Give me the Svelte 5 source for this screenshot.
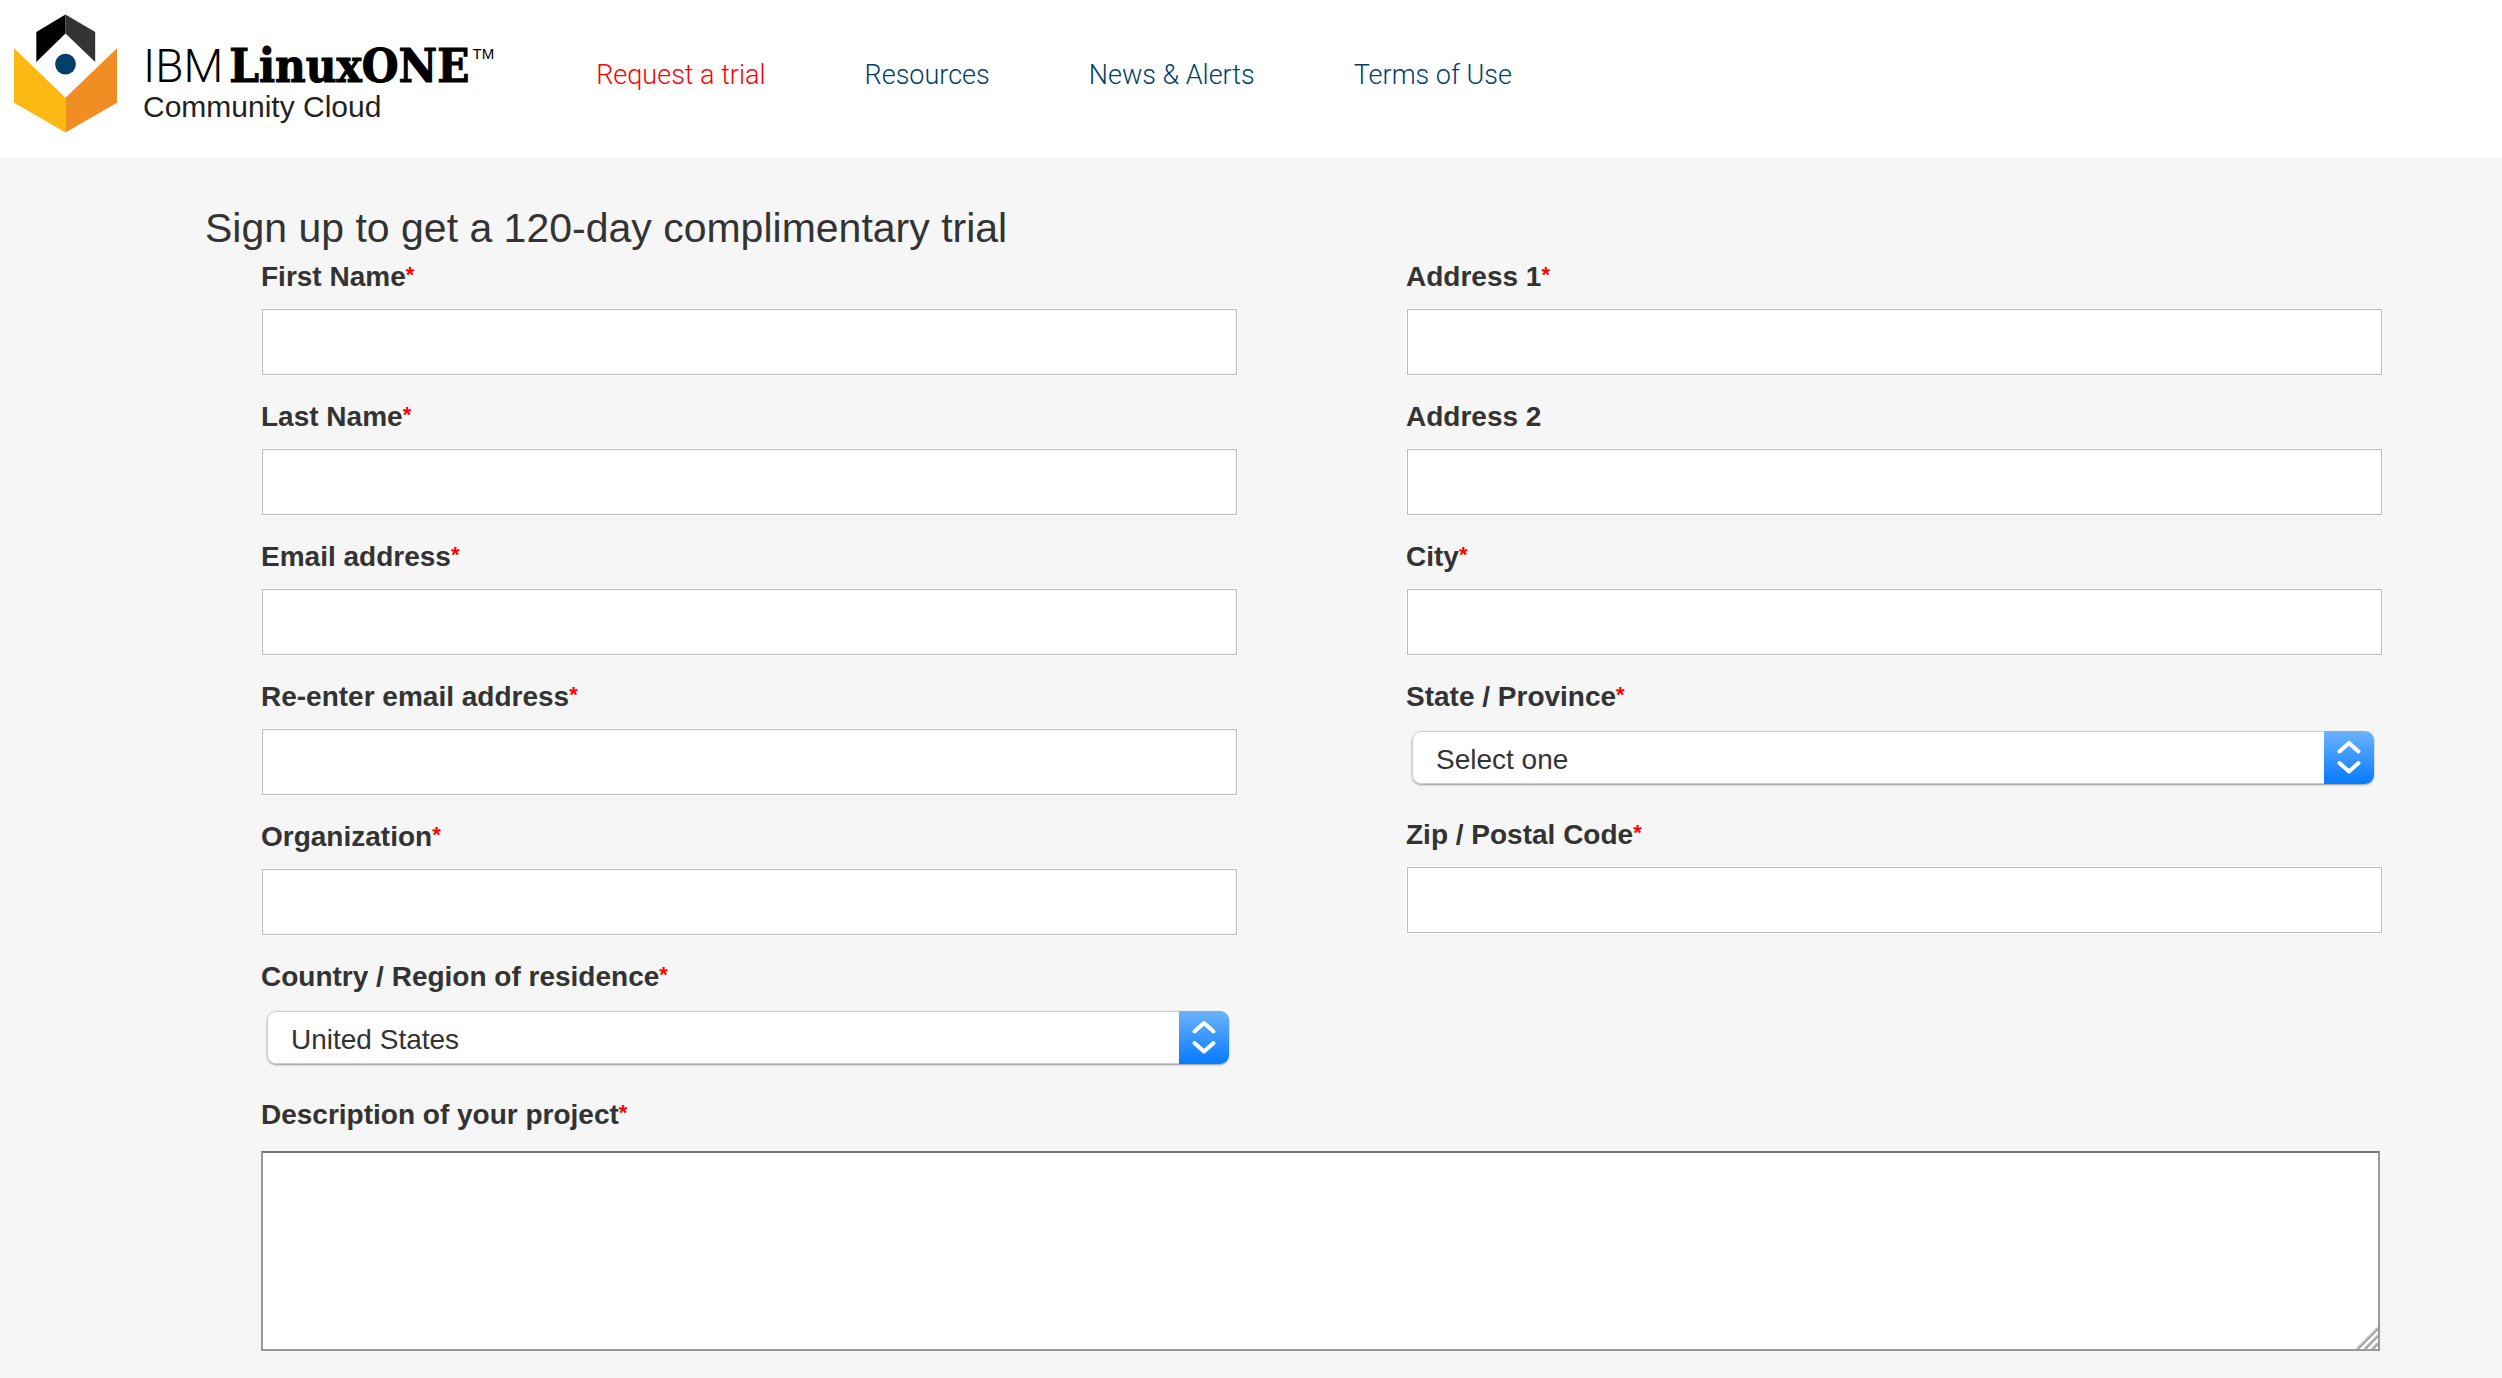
<script>
  const nav = [
    { text: 'Request a trial', href: '#trial', current: true },
    { text: 'Resources', href: '#resources' },
    { text: 'News & Alerts', href: '#news' },
    { text: 'Terms of Use', href: '#terms' }
  ];

  const columns = [
    [
      { id: 'first-name', label: 'First Name', required: true },
      { id: 'last-name', label: 'Last Name', required: true },
      { id: 'email', label: 'Email address', required: true, type: 'email' },
      { id: 'email-confirm', label: 'Re-enter email address', required: true, type: 'email' },
      { id: 'organization', label: 'Organization', required: true },
      { id: 'country', label: 'Country / Region of residence', required: true, options: ['United States', 'Canada'] }
    ],
    [
      { id: 'address-1', label: 'Address 1', required: true },
      { id: 'address-2', label: 'Address 2', required: false },
      { id: 'city', label: 'City', required: true },
      { id: 'state', label: 'State / Province', required: true, options: ['Select one', 'Alabama', 'Alaska'] },
      { id: 'zip', label: 'Zip / Postal Code', required: true }
    ]
  ];
</script>

{#snippet fieldLabel(id, text, required)}
  <label for={id}>{text}{#if required}<span class="star">*</span>{/if}</label>
{/snippet}

<div class="page">
  <header>
    <a class="brand" href="#home">
      <svg class="mark" viewBox="0 0 104 120" aria-hidden="true">
        <path d="M22.500 17.500 52 0v19L22.500 48z" fill="#000" />
        <path d="M52 0l30 17.500V48L52 19z" fill="#333" />
        <path d="M0 34l52 50v35L0 89z" fill="#fdb813" />
        <path d="M104 34L52 84v35l52-30z" fill="#f08e23" />
        <circle cx="52" cy="50" r="10.500" fill="#003f69" />
      </svg>
      <span class="brand-text">
        <span class="product"><span class="ibm">IBM</span><strong>LinuxONE</strong><span class="tm">TM</span></span>
        <span class="tagline">Community Cloud</span>
      </span>
    </a>
    <nav>
      {#each nav as item}
        <a href={item.href} class:current={item.current}>{item.text}</a>
      {/each}
    </nav>
  </header>

  <main>
    <h1>Sign up to get a 120-day complimentary trial</h1>
    <form>
      <div class="columns">
        {#each columns as fields}
          <div class="column">
            {#each fields as field}
              <div class="field">
                {@render fieldLabel(field.id, field.label, field.required)}
                {#if field.options}
                  <div class="select">
                    <select id={field.id}>
                      {#each field.options as option}<option>{option}</option>{/each}
                    </select>
                    <svg viewBox="0 0 50 53" aria-hidden="true">
                      <path d="M15.500 20.500l9.500-8.500 9.500 8.500M15.500 32l9.500 8.500 9.500-8.500" />
                    </svg>
                  </div>
                {:else}
                  <input id={field.id} type={field.type ?? 'text'} />
                {/if}
              </div>
            {/each}
          </div>
        {/each}
      </div>
      <div class="field">
        {@render fieldLabel('description', 'Description of your project', true)}
        <div class="area">
          <textarea id="description"></textarea>
          <svg viewBox="0 0 22 22" aria-hidden="true">
            <path d="M0 22L22 0v22z" fill="#fff" />
            <path d="M1 22L22 1M8.500 22L22 8.500M16 22l6-6" stroke="#ccc" stroke-width="3" />
            <path d="M2 22L22 2M9.500 22L22 9.500M17 22l5-5" stroke="#999" stroke-width="1.500" />
          </svg>
        </div>
      </div>
    </form>
  </main>
</div>

<style>
  :global(body) {
    background: #f6f6f6;
  }

  .page {
    color: #333;
    font-family: 'Liberation Sans', Arial, sans-serif;
    font-size: 28px;
    line-height: 32px;
  }

  header {
    display: flex;
    gap: 102px;
    height: 158px;
    background: #fff;
  }

  .brand {
    display: flex;
    gap: 26px;
    padding: 14px 0 0 14px;
    color: #000;
    text-decoration: none;
  }

  .mark {
    width: 103px;
    height: 120px;
  }

  .brand-text {
    display: flex;
    flex-direction: column;
    padding-top: 26px;
  }

  .product {
    display: flex;
    align-items: baseline;
    line-height: 52px;
  }

  .ibm {
    margin-right: 6px;
    font-family: Roboto, sans-serif;
    font-size: 46px;
    font-weight: 300;
  }

  .product strong {
    font-family: 'DejaVu Serif Condensed', 'DejaVu Serif', serif;
    font-size: 47px;
    -webkit-text-stroke: 1px #000;
  }

  .tm {
    align-self: flex-start;
    margin-left: 3px;
    font-size: 15px;
    line-height: 28px;
  }

  .tagline {
    color: #222;
    font-size: 30px;
    line-height: 30px;
  }

  nav {
    display: flex;
    gap: 99px;
    padding-top: 59px;
    font-family: Roboto, sans-serif;
    font-size: 27px;
    font-weight: 300;
  }

  nav a {
    color: #003f69;
    text-decoration: none;
    white-space: nowrap;
  }

  nav a.current {
    color: #f00;
  }

  main {
    padding: 46px 119px 28px 205px;
  }

  h1 {
    margin: 0 0 9px;
    font-size: 41px;
    font-weight: 400;
    line-height: 48px;
  }

  form {
    padding-left: 56px;
  }

  .columns {
    display: grid;
    grid-template-columns: 1fr 1fr;
    gap: 168px;
  }

  .column,
  .field {
    display: flex;
    flex-direction: column;
  }

  .column .field {
    padding-bottom: 25px;
  }

  label {
    margin-bottom: 15px;
    font-weight: 700;
  }

  .star {
    color: #f00;
    font-size: 22px;
    line-height: 0;
    vertical-align: 4px;
  }

  input {
    box-sizing: border-box;
    height: 66px;
    margin: 1px;
    padding: 0 16px;
    border: 1px solid #bbb;
    border-radius: 0;
    outline: 1px solid #fff;
    background: #fff;
    color: inherit;
    font: inherit;
  }

  .select {
    display: grid;
    grid-template-columns: 1fr 50px;
    margin: 3px 9px 10px 6px;
    overflow: hidden;
    border-radius: 9px;
    box-shadow: 0 1px 2px #999;
  }

  select {
    grid-area: 1 / 1 / 2 / 3;
    height: 53px;
    padding: 4px 50px 0 23px;
    border: 1px solid #ccc;
    border-radius: 9px;
    appearance: none;
    background: #fff;
    color: inherit;
    font: inherit;
  }

  .select svg {
    grid-area: 1 / 2;
    width: 50px;
    height: 53px;
    background: linear-gradient(#6cb3fa, #067aff);
    fill: none;
    stroke: #fff;
    stroke-width: 4;
    stroke-linecap: round;
    stroke-linejoin: round;
    pointer-events: none;
    z-index: 1;
  }

  .area {
    position: relative;
    display: flex;
    margin: 5px 3px 0 0;
  }

  textarea {
    box-sizing: border-box;
    width: 100%;
    height: 200px;
    padding: 8px;
    border: 2px solid #999;
    border-top-color: #757575;
    border-radius: 0;
    background: #fff;
    color: inherit;
    font: inherit;
    resize: vertical;
  }

  .area svg {
    position: absolute;
    right: 2px;
    bottom: 2px;
    width: 22px;
    height: 22px;
    background: #fff;
    pointer-events: none;
  }
</style>
